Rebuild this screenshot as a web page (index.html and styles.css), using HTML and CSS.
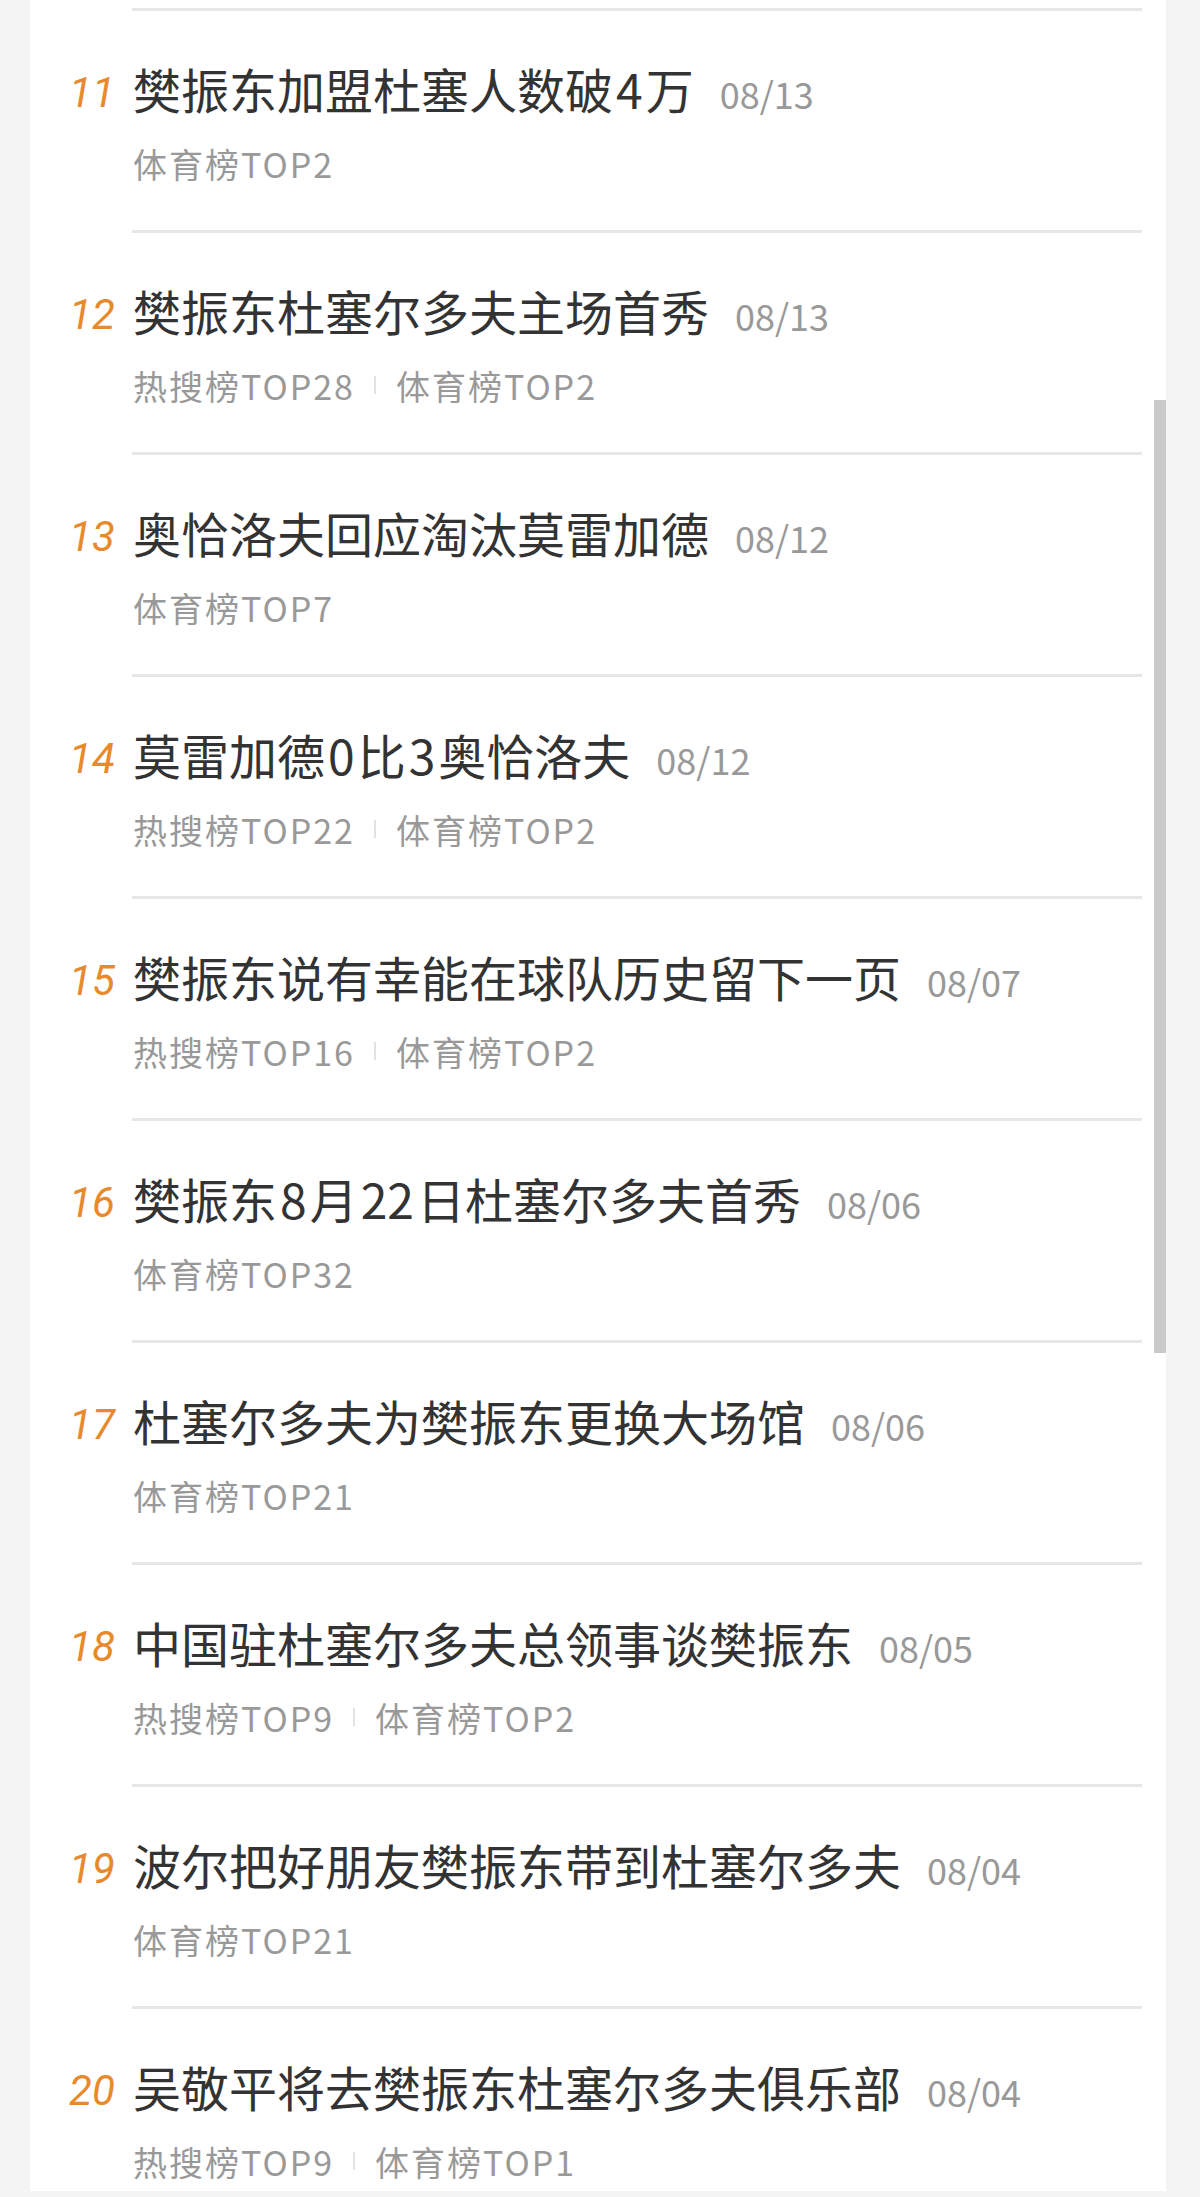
FILE: index.html
```html
<!DOCTYPE html>
<html lang="zh-CN">
<head>
<meta charset="utf-8">
<title>热榜</title>
<link rel="stylesheet" href="styles.css">
</head>
<body>
<div class="panel">
  <ul class="list">
    <li class="row">
      <div class="rank">11</div>
      <div class="body">
        <div class="title"><span class="text">樊振东加盟杜塞人数破<span class="d">4</span>万</span><span class="date">08/13</span></div>
        <div class="meta"><span>体育榜TOP2</span></div>
      </div>
    </li>
    <li class="row">
      <div class="rank">12</div>
      <div class="body">
        <div class="title"><span class="text">樊振东杜塞尔多夫主场首秀</span><span class="date">08/13</span></div>
        <div class="meta"><span>热搜榜TOP28</span><i class="bar"></i><span>体育榜TOP2</span></div>
      </div>
    </li>
    <li class="row">
      <div class="rank">13</div>
      <div class="body">
        <div class="title"><span class="text">奥恰洛夫回应淘汰莫雷加德</span><span class="date">08/12</span></div>
        <div class="meta"><span>体育榜TOP7</span></div>
      </div>
    </li>
    <li class="row">
      <div class="rank">14</div>
      <div class="body">
        <div class="title"><span class="text">莫雷加德<span class="d">0</span>比<span class="d">3</span>奥恰洛夫</span><span class="date">08/12</span></div>
        <div class="meta"><span>热搜榜TOP22</span><i class="bar"></i><span>体育榜TOP2</span></div>
      </div>
    </li>
    <li class="row">
      <div class="rank">15</div>
      <div class="body">
        <div class="title"><span class="text">樊振东说有幸能在球队历史留下一页</span><span class="date">08/07</span></div>
        <div class="meta"><span>热搜榜TOP16</span><i class="bar"></i><span>体育榜TOP2</span></div>
      </div>
    </li>
    <li class="row">
      <div class="rank">16</div>
      <div class="body">
        <div class="title"><span class="text">樊振东<span class="d">8</span>月<span class="d">22</span>日杜塞尔多夫首秀</span><span class="date">08/06</span></div>
        <div class="meta"><span>体育榜TOP32</span></div>
      </div>
    </li>
    <li class="row">
      <div class="rank">17</div>
      <div class="body">
        <div class="title"><span class="text">杜塞尔多夫为樊振东更换大场馆</span><span class="date">08/06</span></div>
        <div class="meta"><span>体育榜TOP21</span></div>
      </div>
    </li>
    <li class="row">
      <div class="rank">18</div>
      <div class="body">
        <div class="title"><span class="text">中国驻杜塞尔多夫总领事谈樊振东</span><span class="date">08/05</span></div>
        <div class="meta"><span>热搜榜TOP9</span><i class="bar"></i><span>体育榜TOP2</span></div>
      </div>
    </li>
    <li class="row">
      <div class="rank">19</div>
      <div class="body">
        <div class="title"><span class="text">波尔把好朋友樊振东带到杜塞尔多夫</span><span class="date">08/04</span></div>
        <div class="meta"><span>体育榜TOP21</span></div>
      </div>
    </li>
    <li class="row last">
      <div class="rank">20</div>
      <div class="body">
        <div class="title"><span class="text">吴敬平将去樊振东杜塞尔多夫俱乐部</span><span class="date">08/04</span></div>
        <div class="meta"><span>热搜榜TOP9</span><i class="bar"></i><span>体育榜TOP1</span></div>
      </div>
    </li>
  </ul>
  <div class="scrollbar"></div>
</div>
</body>
</html>
```

FILE: styles.css
```css
html, body {
  margin: 0;
  padding: 0;
}
body {
  background: #f4f4f4;
  height: 2197px;
  overflow: hidden;
  font-family: "Noto Sans CJK SC", "Noto Sans", sans-serif;
}
.panel {
  position: relative;
  margin: 0 34px 0 30px;
  background: #ffffff;
  padding-top: 8px;
}
.list {
  list-style: none;
  margin: 0;
  padding: 0;
}
.row {
  display: flex;
}
.rank {
  width: 102px;
  flex: none;
  box-sizing: border-box;
  padding: 51px 0 0 22px;
  line-height: 67px;
  text-align: center;
  font-family: Roboto, "Noto Sans", sans-serif;
  font-style: italic;
  font-size: 42px;
  color: #e8892b;
}
.body {
  flex: 1;
  margin-right: 24px;
  border-top: 3px solid #e7e7e7;
  padding: 44px 0 43px 1px;
}
.row.last .body {
  padding-bottom: 6px;
}
.title {
  line-height: 67px;
  height: 67px;
  white-space: nowrap;
}
.text {
  font-size: 48px;
  color: #333333;
}
.d {
  margin: 0 3px;
}
.date {
  font-size: 36px;
  color: #999999;
  margin-left: 26px;
}
.meta {
  margin-top: 17px;
  height: 48px;
  display: flex;
  align-items: center;
  font-size: 34px;
  letter-spacing: 2px;
  color: #999999;
}
.bar {
  display: block;
  width: 2px;
  height: 18px;
  background: #e2e2e2;
  margin: 0 20px 0 19px;
}
.scrollbar {
  position: absolute;
  right: 0;
  top: 400px;
  width: 12px;
  height: 953px;
  background: #c9c9c9;
}
```
